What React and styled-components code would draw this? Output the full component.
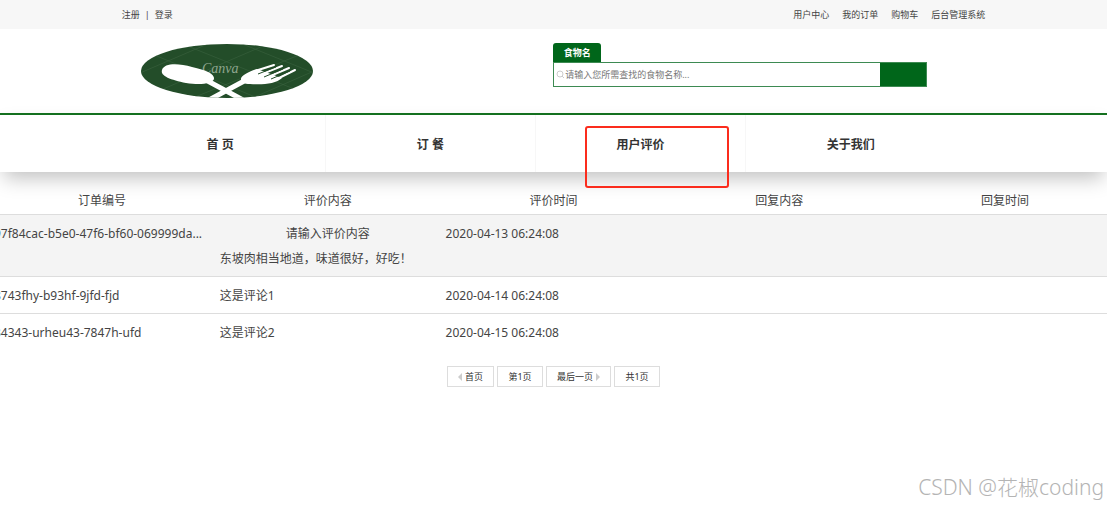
import React from 'react';
import styled, { createGlobalStyle } from 'styled-components';

const GlobalStyle = createGlobalStyle`
    * {
        box-sizing:border-box;
    }
    body {
        margin:0;
        background:#fff;
        color:#444;
        font-family:"Noto Sans", "Noto Sans CJK SC", sans-serif;
        font-size:12px;
        overflow-x:hidden;
    }
    a {
        color:inherit;
        text-decoration:none;
    }
`;

const Page = styled.div`
    position:relative;
    min-height:100vh;
    overflow:hidden;
`;

const TopBar = styled.div`
    background:#f7f7f7;
    font-size:9px;
    line-height:29px;
`;

const TopInner = styled.div`
    width:78%;
    margin:0 auto;
    display:flex;
    justify-content:space-between;
`;

const TopLinks = styled.div`
    display:flex;
    gap:${props => props.$gap}px;
`;

const Header = styled.header`
    width:76%;
    margin:0 auto;
    height:84px;
    display:flex;
    justify-content:space-between;
`;

const LogoLink = styled.a`
    padding:14px 0 0 7px;
`;

const SearchForm = styled.form`
    flex:0 0 374px;
    padding-top:14px;
    margin-right:47px;
`;

const SearchTab = styled.label`
    display:block;
    width:48px;
    height:19px;
    border-radius:3px 3px 0 0;
    background:#00661a;
    color:#fff;
    font-size:9px;
    font-weight:bold;
    line-height:19px;
    text-align:center;
`;

const SearchRow = styled.div`
    display:flex;
    align-items:center;
    height:25px;
    border:1px solid #3d8a52;
    padding-left:2px;
`;

const SearchInput = styled.input`
    flex:1;
    min-width:0;
    border:0;
    padding:0;
    outline:0;
    font-family:inherit;
    font-size:9px;
    color:#444;
    &::placeholder {
        color:#777;
    }
`;

const SearchButton = styled.button`
    width:46px;
    align-self:stretch;
    border:0;
    background:#00661a;
`;

const Nav = styled.nav`
    position:relative;
    border-top:2px solid #14701f;
    background:#fff;
    box-shadow:0 10px 20px -4px rgba(0,0,0,0.25);
`;

const NavList = styled.ul`
    width:876px;
    max-width:100%;
    height:57px;
    margin:0 auto;
    padding:0;
    display:flex;
    list-style:none;
`;

const NavItem = styled.li`
    flex:0 0 24%;
    border-right:1px solid ${props => props.$last ? 'transparent' : '#f7f7f7'};
    font-weight:bold;
    line-height:59px;
    text-align:center;
    color:#333;
`;

const Highlight = styled.div`
    position:absolute;
    top:11px;
    left:585px;
    width:144px;
    height:62px;
    border:2px solid #fb2c1d;
    border-radius:3px;
    pointer-events:none;
`;

const Reviews = styled.table`
    width:calc(100% + 22px);
    margin:13px -11px 0;
    table-layout:fixed;
    border-collapse:collapse;
    line-height:25px;
`;

const HeadCell = styled.th`
    padding:3px 5px 1px;
    font-weight:normal;
    text-align:center;
    border-bottom:1px solid #ddd;
`;

const Row = styled.tr`
    background:${props => props.$active ? '#f4f4f4' : 'transparent'};
    & + & {
        border-top:1px solid #ddd;
    }
`;

const Cell = styled.td`
    padding:6px 5px 5px;
    vertical-align:top;
    white-space:nowrap;
`;

const CellTitle = styled.div`
    text-align:center;
`;

const Pager = styled.div`
    display:flex;
    justify-content:center;
    gap:3px;
    margin-top:16px;
`;

const PageButton = styled.button`
    display:flex;
    align-items:center;
    justify-content:center;
    gap:3px;
    min-width:46px;
    height:21px;
    padding:0 10px;
    border:1px solid #ddd;
    background:#fff;
    color:#333;
    font-family:inherit;
    font-size:9px;
`;

const Arrow = styled.span`
    width:0;
    height:0;
    border:4px solid transparent;
    border-${props => props.$side}:4px solid #ccc;
    border-${props => props.$side === 'right' ? 'left' : 'right'}:0;
`;

const Watermark = styled.div`
    position:absolute;
    right:3px;
    bottom:5px;
    font-size:21px;
    font-weight:300;
    line-height:30px;
    color:#b4b4b4;
`;

const menu = ['首 页', '订 餐', '用户评价', '关于我们'];
const heads = ['订单编号', '评价内容', '评价时间', '回复内容', '回复时间'];
const reviews = [
    { id:'97f84cac-b5e0-47f6-bf60-069999da...', title:'请输入评价内容', text:'东坡肉相当地道，味道很好，好吃！', time:'2020-04-13 06:24:08' },
    { id:'8743fhy-b93hf-9jfd-fjd', text:'这是评论1', time:'2020-04-14 06:24:08' },
    { id:'34343-urheu43-7847h-ufd', text:'这是评论2', time:'2020-04-15 06:24:08' },
];

function Logo() {
    return (
        <svg width="174" height="56" viewBox="0 0 174 56" role="img" aria-label="Canva">
            <defs>
                <clipPath id="plate"><ellipse cx="87" cy="28" rx="86" ry="27" /></clipPath>
            </defs>
            <g clipPath="url(#plate)">
                <rect width="174" height="56" fill="#234d29" />
                <path d="M0 30L70 0M0 56L130 0M50 56L174 6M110 56L174 28M0 6L120 56M40 0L174 54M100 0L174 30" stroke="#3b6340" fill="none" opacity="0.6" />
                <text x="62" y="30" fontFamily="Liberation Serif, serif" fontStyle="italic" fontSize="14" fill="#8fa68f">Canva</text>
                <path d="M64 36L103 57M106 37L69 57" stroke="#fff" strokeWidth="5" />
                <path d="M22 27C24 20 38 20 52 24C66 27 75 31 74 36C72 41 60 42 46 40C31 37 20 33 22 27Z" fill="#fff" />
                <path d="M101 37C100 33 108 29 117 26L142 35C136 41 122 42 110 41C104 41 101 39 101 37Z" fill="#fff" />
                <path d="M115 28L134 22M122 31L142 23M130 33L149 25M137 36L155 27" stroke="#fff" strokeWidth="2" strokeLinecap="round" />
                <path d="M118 31L136 24M124 34L143 26M131 36L150 28" stroke="#234d29" />
            </g>
        </svg>
    );
}

function App() {
    return (
        <Page>
            <GlobalStyle />
            <TopBar>
                <TopInner>
                    <TopLinks $gap={5}>
                        <a href="#register">注册</a>
                        <span>|</span>
                        <a href="#login">登录</a>
                    </TopLinks>
                    <TopLinks $gap={13}>
                        <a href="#user">用户中心</a>
                        <a href="#orders">我的订单</a>
                        <a href="#cart">购物车</a>
                        <a href="#admin">后台管理系统</a>
                    </TopLinks>
                </TopInner>
            </TopBar>
            <Header>
                <LogoLink href="#home"><Logo /></LogoLink>
                <SearchForm onSubmit={e => e.preventDefault()}>
                    <SearchTab htmlFor="food">食物名</SearchTab>
                    <SearchRow>
                        <svg width="9" height="9" viewBox="0 0 9 9" fill="none" stroke="#ccc">
                            <circle cx="4" cy="4" r="3" />
                            <path d="M6 6L8 8" />
                        </svg>
                        <SearchInput id="food" placeholder="请输入您所需查找的食物名称..." />
                        <SearchButton aria-label="搜索" />
                    </SearchRow>
                </SearchForm>
            </Header>
            <Nav>
                <NavList>
                    {menu.map((name, i) => (
                        <NavItem key={name} $last={i === menu.length - 1}><a href="#menu">{name}</a></NavItem>
                    ))}
                </NavList>
                <Highlight />
            </Nav>
            <Reviews>
                <thead>
                    <tr>{heads.map(head => <HeadCell key={head}>{head}</HeadCell>)}</tr>
                </thead>
                <tbody>
                    {reviews.map((review, i) => (
                        <Row key={review.id} $active={i === 0}>
                            <Cell>{review.id}</Cell>
                            <Cell>
                                {review.title && <CellTitle>{review.title}</CellTitle>}
                                {review.text}
                            </Cell>
                            <Cell>{review.time}</Cell>
                            <Cell />
                            <Cell />
                        </Row>
                    ))}
                </tbody>
            </Reviews>
            <Pager>
                <PageButton><Arrow $side="right" />首页</PageButton>
                <PageButton>第1页</PageButton>
                <PageButton>最后一页<Arrow $side="left" /></PageButton>
                <PageButton>共1页</PageButton>
            </Pager>
            <Watermark>CSDN @花椒coding</Watermark>
        </Page>
    );
}

export default App
